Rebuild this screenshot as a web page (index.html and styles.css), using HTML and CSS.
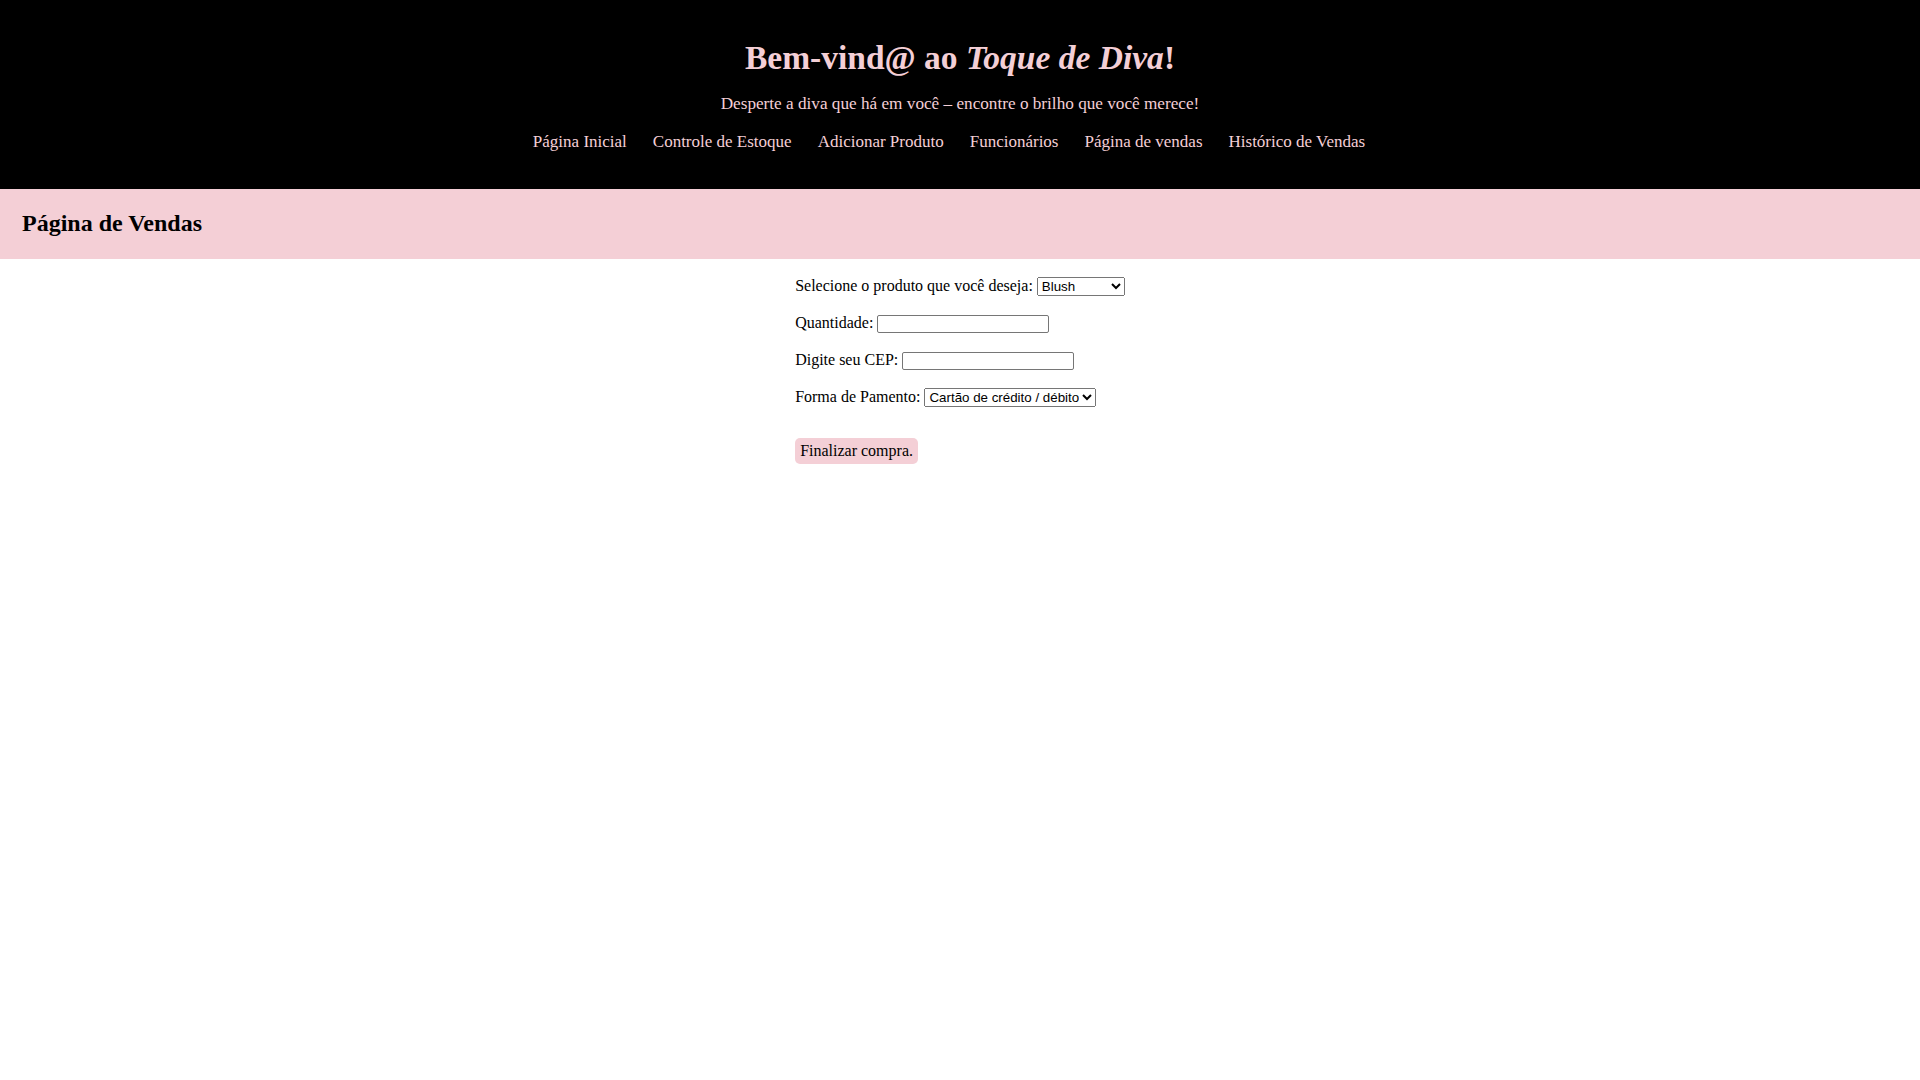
FILE: index.html
```html
<!DOCTYPE html>
<html lang="pt-BR">
<head>
<meta charset="utf-8">
<title>Toque de Diva - Página de Vendas</title>
<link rel="stylesheet" href="styles.css">
</head>
<body>
<header class="site-header">
  <h1 class="site-title">Bem-vind@ ao <em>Toque de Diva</em>!</h1>
  <p class="site-tagline">Desperte a diva que há em você – encontre o brilho que você merece!</p>
  <nav class="site-nav">
    <a href="#">Página Inicial</a>
    <a href="#">Controle de Estoque</a>
    <a href="#">Adicionar Produto</a>
    <a href="#">Funcionários</a>
    <a href="#">Página de vendas</a>
    <a href="#">Histórico de Vendas</a>
  </nav>
</header>
<section class="page-band">
  <h2 class="page-title">Página de Vendas</h2>
</section>
<main class="content">
  <form class="sale-form">
    <p class="row"><label>Selecione o produto que você deseja: <select class="product-select">
      <option>Blush</option>
      <option>Batom</option>
      <option>Rímel</option>
      <option>Base</option>
    </select></label></p>
    <p class="row"><label>Quantidade: <input type="text" class="field"></label></p>
    <p class="row"><label>Digite seu CEP: <input type="text" class="field"></label></p>
    <p class="row"><label>Forma de Pamento: <select class="pay-select">
      <option>Cartão de crédito / débito</option>
      <option>Pix</option>
      <option>Boleto</option>
    </select></label></p>
    <div class="actions"><button type="button" class="submit-btn">Finalizar compra.</button></div>
  </form>
</main>
</body>
</html>
```
FILE: styles.css
```css
html, body {
  margin: 0;
  padding: 0;
  background: #ffffff;
}
body {
  font-family: "Liberation Serif", "Times New Roman", serif;
  font-size: 16px;
  color: #000;
}
.site-header {
  background: #000;
  color: #f4cfd6;
  text-align: center;
  padding: 39px 0 0;
  height: 189px;
  box-sizing: border-box;
}
.site-title {
  margin: 0;
  font-size: 33.5px;
  font-weight: bold;
  line-height: 37px;
}
.site-title em {
  font-style: italic;
}
.site-tagline {
  margin: 19px 0 0;
  font-size: 17.2px;
  line-height: 18px;
}
.site-nav {
  margin-top: 20px;
  display: flex;
  justify-content: center;
  gap: 4px;
}
.site-nav a {
  color: #f4cfd6;
  text-decoration: none;
  font-size: 17px;
  line-height: 18px;
  margin-right: 22px;
}
.page-band {
  background: #f4cfd6;
  padding: 20px 22px 22px;
}
.page-title {
  margin: 0;
  font-size: 24px;
  line-height: 28px;
  font-weight: bold;
}
.content {
  display: flex;
  justify-content: center;
}
.sale-form {
  display: flex;
  flex-direction: column;
  align-items: flex-start;
}
.row {
  margin: 16px 0 0;
  line-height: 21px;
}
.product-select,
.pay-select,
.field {
  font-family: "Liberation Sans", Arial, sans-serif;
  font-size: 13.333px;
}
.product-select {
  width: 88px;
}
.field {
  width: 172px;
  box-sizing: border-box;
  height: 18px;
  padding: 1px 2px;
  border: 1px solid #767676;
  border-radius: 2px;
}
.actions {
  margin-top: 31px;
}
.submit-btn {
  background: #f4cfd6;
  border: none;
  border-radius: 5px;
  padding: 4px 5px;
  font-family: "Liberation Serif", "Times New Roman", serif;
  font-size: 16px;
  line-height: 18px;
  color: #000;
  cursor: pointer;
}
```
